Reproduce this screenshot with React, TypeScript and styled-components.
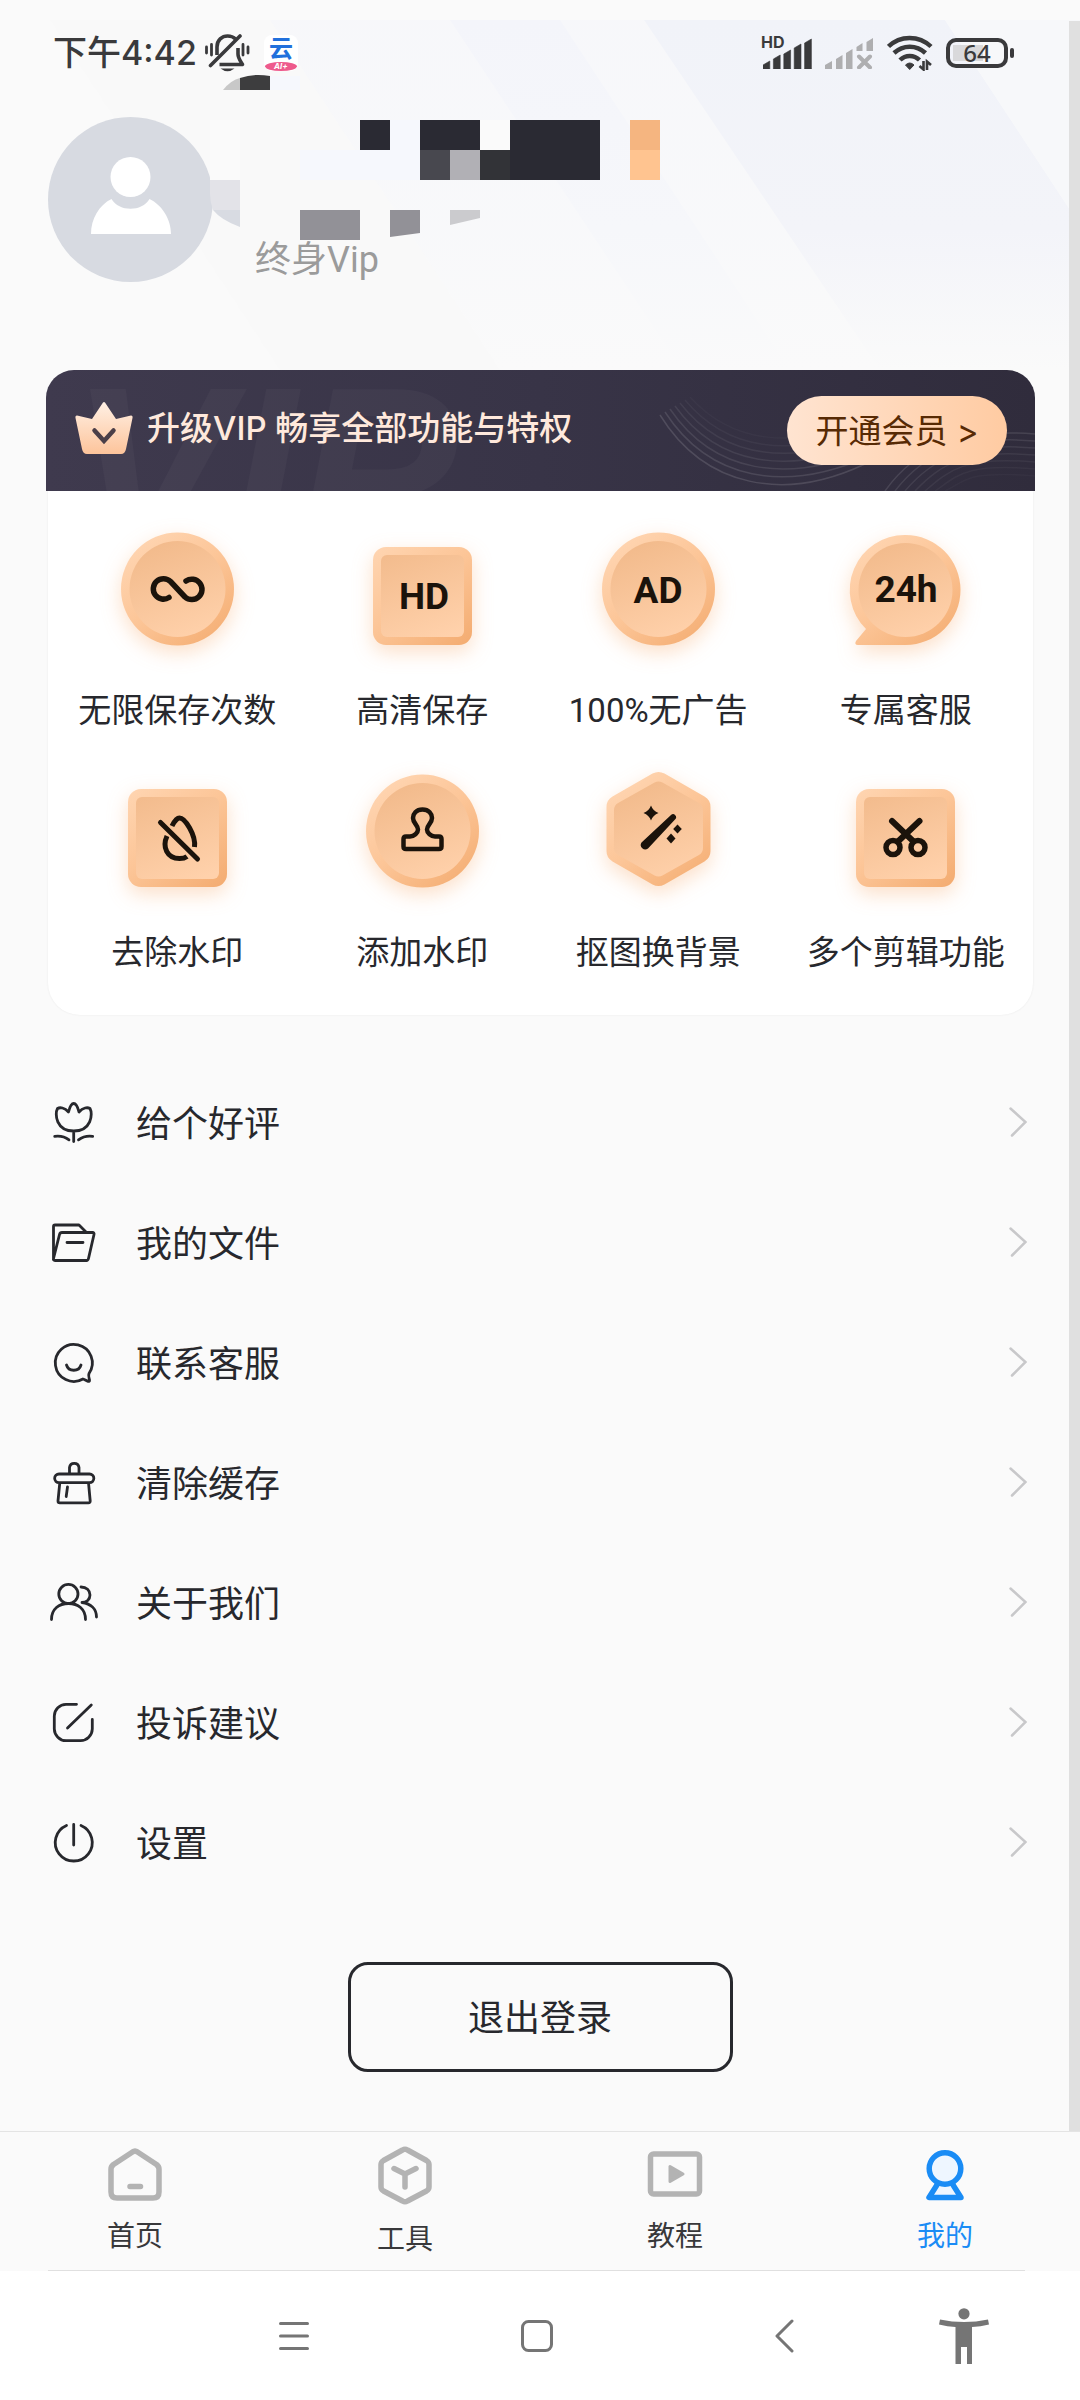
import React from "react";
import styled, { createGlobalStyle } from "styled-components";

const ink = "#27282d";
const grey = "#757575";
const muted = "#b3b3b3";
const blue = "#1a8cf5";

const GlobalStyle = createGlobalStyle`
  *, *::before, *::after { box-sizing: border-box; }
  body {
    margin: 0;
    background: #fafafa;
    color: ${ink};
    font-family: Inter, "Noto Sans CJK SC", sans-serif;
  }
  button { font: inherit; color: inherit; background: none; border: 0; padding: 0; cursor: pointer; }
  a { color: inherit; text-decoration: none; }
  ul { list-style: none; margin: 0; padding: 0; }
  svg { display: block; flex: none; }
`;

const Page = styled.div`
  min-height: 100vh;
  display: flex;
  flex-direction: column;
`;

const Content = styled.main`
  position: relative;
  flex: 1;
  padding-bottom: 59px;
`;

const ScrollTrack = styled.div`
  position: absolute;
  top: 21px;
  right: 0;
  bottom: 0;
  width: 11px;
  background: #e0e0e0;
`;

/* ---------- header ---------- */

const Header = styled.header`
  position: relative;
  padding: 20px 48px 88px;
`;

const HeaderArt = styled.svg`
  position: absolute;
  top: 20px;
  left: 0;
  width: 100%;
  height: 350px;
`;

const StatusBar = styled.div`
  position: relative;
  display: flex;
  align-items: center;
  justify-content: space-between;
  height: 66px;
  padding: 0 17px 0 5px;
  color: #3a3a3c;
`;

const StatusGroup = styled.div<{ $gap: number }>`
  display: flex;
  align-items: center;
  gap: ${(p) => p.$gap}px;
`;

const Clock = styled.time`
  font-size: 34px;
  line-height: 40px;
  font-weight: 500;
`;

const CloudApp = styled.span`
  position: relative;
  display: block;
  width: 34px;
  height: 36px;
  margin-left: 6px;
  overflow: hidden;
  border-radius: 8px;
  background: #fff;
  color: #2170dc;
  font-size: 24px;
  line-height: 28px;
  font-weight: 700;
  text-align: center;
`;

const CloudTag = styled.span`
  position: absolute;
  left: 1px;
  right: 1px;
  bottom: 0;
  height: 9px;
  border-radius: 50%;
  background: #ee5a8c;
  color: #fff;
  font-size: 8px;
  line-height: 9px;
  font-style: italic;
`;

const Signal = styled.span`
  position: relative;
  display: block;
`;

const SignalTag = styled.span`
  position: absolute;
  top: -4px;
  left: -2px;
  font-size: 16px;
  line-height: 16px;
  font-weight: 700;
`;

const Battery = styled.span`
  position: relative;
  display: flex;
  align-items: center;
  justify-content: center;
  width: 62px;
  height: 30px;
  margin-right: 7px;
  border: 4px solid #3a3a3c;
  border-radius: 10px;
  background: linear-gradient(#d9d9db, #d9d9db) 3px 3px / 30px 16px no-repeat;
  font-family: "Noto Sans", sans-serif;
  font-size: 24px;
  line-height: 24px;
  font-weight: 500;

  &::after {
    content: "";
    position: absolute;
    right: -10px;
    top: 6px;
    width: 4px;
    height: 10px;
    border-radius: 2px;
    background: #3a3a3c;
  }
`;

const Profile = styled.div`
  position: relative;
  display: flex;
  align-items: flex-end;
  gap: 42px;
  margin-top: 31px;
`;

const Level = styled.p`
  margin: 0;
  color: #9b9b9b;
  font-family: Roboto, "Noto Sans CJK SC", sans-serif;
  font-size: 36px;
  line-height: 44px;
`;

const MaskedName = styled.svg`
  position: absolute;
  left: 162px;
  top: -43px;
`;

/* ---------- membership card ---------- */

const Membership = styled.section`
  margin: 0 45px 0 46px;
`;

const Banner = styled.div`
  position: relative;
  display: flex;
  align-items: center;
  justify-content: space-between;
  height: 121px;
  padding: 0 28px 0 29px;
  overflow: hidden;
  border-radius: 28px 28px 0 0;
  background: linear-gradient(90deg, #3f3a4e, #383447 50%, #302c3c);
`;

const Watermark = styled.span`
  position: absolute;
  left: 24px;
  top: -14px;
  color: rgba(255, 255, 255, 0.03);
  font-family: "Liberation Sans", sans-serif;
  font-size: 240px;
  line-height: 230px;
  font-weight: 700;
  font-style: italic;
`;

const Ripples = styled.svg`
  position: absolute;
  right: 0;
  top: 0;
`;

const BannerLead = styled.div`
  position: relative;
  display: flex;
  align-items: center;
  gap: 14px;
  padding-bottom: 6px;
`;

const BannerTitle = styled.h2`
  margin: 0;
  color: #ffe9dc;
  font-size: 33px;
  line-height: 44px;
  font-weight: 500;
`;

const UpgradeButton = styled.button`
  position: relative;
  width: 220px;
  height: 69px;
  border-radius: 35px;
  background: linear-gradient(90deg, #ffe4d1, #ffcba2);
  color: #572a04;
  font-size: 33px;
  line-height: 44px;
`;

const Features = styled.ul`
  display: grid;
  grid-template-columns: 258fr 231fr 240fr 254fr;
  row-gap: 16px;
  margin: 0 2px;
  padding: 16px 0 40px;
  border-radius: 0 0 32px 32px;
  background: #fff;
  box-shadow: 0 0 2px #e8e8e8;
`;

const Feature = styled.li`
  display: flex;
  flex-direction: column;
  align-items: center;
  gap: 17px;
  font-family: Roboto, "Noto Sans CJK SC", sans-serif;
  font-size: 33px;
  line-height: 44px;
`;

const BadgeText = styled.text`
  font-family: Roboto, sans-serif;
  font-size: 37px;
  font-weight: 700;
  text-anchor: middle;
  fill: #1b130b;
`;

/* ---------- menu ---------- */

const Menu = styled.ul`
  margin: 47px 53px 60px 50px;
`;

const MenuLink = styled.a`
  display: flex;
  align-items: center;
  gap: 38px;
  height: 120px;
  font-size: 36px;
  line-height: 48px;
`;

const MenuLabel = styled.span`
  flex: 1;
  padding-top: 3px;
`;

const LogoutButton = styled.button`
  display: block;
  width: 385px;
  height: 110px;
  margin: 0 auto;
  padding-top: 2px;
  border: 3px solid ${ink};
  border-radius: 20px;
  font-size: 36px;
  line-height: 48px;
`;

/* ---------- bottom bars ---------- */

const TabBar = styled.nav`
  position: relative;
  display: grid;
  grid-template-columns: repeat(4, 1fr);
  height: 140px;
  padding-top: 14px;
  border-top: 1px solid #e4e4e4;

  &::after {
    content: "";
    position: absolute;
    left: 48px;
    right: 55px;
    bottom: 0;
    height: 1px;
    background: #e0e0e0;
  }
`;

const Tab = styled.a<{ $active?: boolean }>`
  display: flex;
  flex-direction: column;
  align-items: center;
  gap: 14px;
  color: ${(p) => (p.$active ? blue : "#38383a")};
  font-size: 28px;
  line-height: 40px;
`;

const SystemNav = styled.div`
  display: grid;
  grid-template-columns: 244fr 242fr 252fr 108fr;
  height: 129px;
  padding: 0 62px 0 172px;
  background: #fff;
`;

const SystemButton = styled.button`
  display: flex;
  align-items: center;
  justify-content: center;
`;

/* ---------- drawings ---------- */

function Gradients() {
  return (
    <svg width="0" height="0" style={{ position: "absolute" }} aria-hidden="true">
      <defs>
        <linearGradient id="rim" gradientUnits="userSpaceOnUse" x1="40" y1="30" x2="126" y2="136">
          <stop offset="0" stopColor="#ffd6b3" />
          <stop offset="0.5" stopColor="#fcc597" />
          <stop offset="1" stopColor="#f4ad72" />
        </linearGradient>
        <linearGradient id="face" gradientUnits="userSpaceOnUse" x1="62" y1="34" x2="100" y2="132">
          <stop offset="0" stopColor="#f2ba8b" />
          <stop offset="1" stopColor="#ffd1ab" />
        </linearGradient>
        <linearGradient id="crown" x1="0" y1="0" x2="0" y2="1">
          <stop offset="0" stopColor="#fff0e4" />
          <stop offset="1" stopColor="#fdc49b" />
        </linearGradient>
        <linearGradient id="bandStrong" x1="0" y1="0" x2="0" y2="1">
          <stop offset="0" stopColor="#f1f3f9" />
          <stop offset="0.6" stopColor="#f3f4f9" />
          <stop offset="1" stopColor="#fafafa" />
        </linearGradient>
        <linearGradient id="bandSoft" x1="0" y1="0" x2="0" y2="1">
          <stop offset="0" stopColor="#f4f5fa" />
          <stop offset="0.6" stopColor="#f6f7fa" />
          <stop offset="1" stopColor="#fafafa" />
        </linearGradient>
        <filter id="glow" x="-40%" y="-40%" width="180%" height="180%">
          <feDropShadow dx="0" dy="7" stdDeviation="10" floodColor="#f8b988" floodOpacity="0.45" />
        </filter>
      </defs>
    </svg>
  );
}

type Shape = "round" | "square" | "hex" | "bubble";

function Badge({ shape, children }: { shape: Shape; children: React.ReactNode }) {
  return (
    <svg width="165" height="165" viewBox="0 0 165 165" overflow="visible" aria-hidden="true">
      {shape === "round" && (
        <>
          <circle cx="82.5" cy="82" r="56.5" fill="url(#rim)" filter="url(#glow)" />
          <circle cx="82.5" cy="82" r="48" fill="url(#face)" />
        </>
      )}
      {shape === "square" && (
        <>
          <rect x="33" y="40" width="99" height="98" rx="13" fill="url(#rim)" filter="url(#glow)" />
          <rect x="41" y="48" width="83" height="82" rx="6" fill="url(#face)" />
        </>
      )}
      {shape === "hex" && (
        <>
          <path d="M82.5 35 122.500 58V102L82.5 125 42.500 102V58Z" fill="url(#rim)" stroke="url(#rim)" strokeWidth="24" strokeLinejoin="round" filter="url(#glow)" />
          <path d="M82.5 40.500 119 61V99L82.500 119.500 46 99V61Z" fill="url(#face)" stroke="url(#face)" strokeWidth="16" strokeLinejoin="round" />
        </>
      )}
      {shape === "bubble" && (
        <>
          <path d="M82.500 28A55 55 0 0 1 82.500 138H35Q31 138 33 134L43 122A55 55 0 0 1 82.500 28Z" fill="url(#rim)" filter="url(#glow)" />
          <circle cx="82.5" cy="83" r="47" fill="url(#face)" />
        </>
      )}
      <g fill="none" stroke="#1b130b" strokeLinecap="round" strokeLinejoin="round">
        {children}
      </g>
    </svg>
  );
}

const features: { label: string; shape: Shape; glyph: React.ReactNode }[] = [
  {
    label: "无限保存次数",
    shape: "round",
    glyph: <path strokeWidth="5.500" d="M74 90.500A10.200 10.200 0 1 1 75.500 74.500L90 90A10.200 10.200 0 1 0 91 74" />,
  },
  { label: "高清保存", shape: "square", glyph: <BadgeText stroke="none" x="84" y="102">HD</BadgeText> },
  { label: "100%无广告", shape: "round", glyph: <BadgeText stroke="none" x="82" y="96">AD</BadgeText> },
  { label: "专属客服", shape: "bubble", glyph: <BadgeText stroke="none" x="83" y="95">24h</BadgeText> },
  {
    label: "去除水印",
    shape: "square",
    glyph: (
      <>
        <path strokeWidth="5" strokeLinecap="butt" d="M77 77C80 71 83 69 84.500 69C90 69 101 86 99.500 98M72 87C67 98 72 109.500 84.500 109.500C88 109.500 90 109 92 107.500" />
        <path strokeWidth="5" d="M65.500 73.500 102.500 110" />
      </>
    ),
  },
  {
    label: "添加水印",
    shape: "round",
    glyph: (
      <path strokeWidth="4.5" d="M82.500 60.500C76 60.500 73 65 73 69C73 74 78 76 78 80.500C78 84 74 87.500 70 87.500H66Q63.500 87.500 63.500 90V97.500Q63.500 100 66 100H99Q101.500 100 101.500 97.500V90Q101.500 87.500 99 87.500H95C91 87.500 87 84 87 80.500C87 76 92 74 92 69C92 65 89 60.500 82.500 60.500Z" />
    ),
  },
  {
    label: "抠图换背景",
    shape: "hex",
    glyph: (
      <g fill="#1b130b" stroke="none">
        <path d="M65.500 93.500 95 66A3 3 0 0 1 99 70.500L72 99.500A4.500 4.500 0 0 1 65.500 93.500Z" />
        <path d="M75 56.500Q77 62 82.500 64 77 66 75 71.500 73 66 67.500 64 73 62 75 56.500Z" />
        <path d="M101.500 75.500 105.800 80 101.500 84.500 97.200 80Z" />
        <path d="M95 84.500 99.500 89.500 95 94.500 90.500 89.500Z" />
      </g>
    ),
  },
  {
    label: "多个剪辑功能",
    shape: "square",
    glyph: (
      <>
        <path strokeWidth="6" d="M69 72 90 92M96.500 72 75.500 92" />
        <g strokeWidth="5.5">
          <circle cx="70" cy="98.5" r="7" />
          <circle cx="95" cy="98.5" r="7" />
        </g>
      </>
    ),
  },
];

const menu: { label: string; icon: React.ReactNode }[] = [
  {
    label: "给个好评",
    icon: (
      <path d="M18.500 14C14.500 9.500 10 9 7.500 10.500C4.500 16 6 33 23.700 33C41.500 33 43 16 40 10.500C37.500 9 33 9.500 29 14C27.500 8 25.500 5.500 23.700 5.500C22 5.500 20 8 18.500 14ZM23.700 33V43.500M4.700 38.300C10.500 37.500 15 38.800 19 41.800M42.700 38.300C37 37.500 32.500 38.800 28.500 41.800" />
    ),
  },
  {
    label: "我的文件",
    icon: (
      <path d="M3.500 41.500V8.500Q3.500 7 5 7H29L36 14M12 14.500H42.500Q44.500 14.500 44 16.500L38.500 40.500Q38 42.500 36.500 42.500H5Q3 42.500 3.500 40.500L9.500 16.500Q10 14.500 12 14.500ZM17 24.500H33" />
    ),
  },
  {
    label: "联系客服",
    icon: (
      <path d="M33 41A18.500 18.500 0 1 1 39 35.500C38 37.500 39 40 39.500 42Q39.800 43.500 38 43.300C36.500 43 35 41.500 33 41ZM16.500 27C18.500 34 29 34 31 27" />
    ),
  },
  {
    label: "清除缓存",
    icon: (
      <path d="M19.500 16V9.500A4.800 4.800 0 0 1 29 9.500V16M9 16H39.500A4.300 4.300 0 0 1 39.500 24.700H9A4.300 4.300 0 0 1 9 16ZM9.800 24.700 8 43Q8 44.800 9.800 44.800H38.500Q40.300 44.800 40.200 43L38.500 24.700M17.500 29 16.200 38.500" />
    ),
  },
  {
    label: "关于我们",
    icon: (
      <path d="M28 16A9.600 9.600 0 1 1 8.800 16A9.600 9.600 0 0 1 28 16ZM1.500 41.500C1.500 31 9 25.500 18.500 25.500C28 25.500 35.500 31 35.500 41.500M31 9C36.500 9 40 12.500 40 17C40 21.500 36.500 24.500 32 24.500C41 25.500 46.500 31 46.500 39" />
    ),
  },
  {
    label: "投诉建议",
    icon: (
      <path d="M26.500 6.300H16A12 12 0 0 0 4.300 18V31A12 12 0 0 0 16 42.700H30.500A12 12 0 0 0 42.300 31V21.500M17.500 30 41.300 7" />
    ),
  },
  {
    label: "设置",
    icon: <path d="M16.500 7.500A18.500 18.500 0 1 0 31 7.500M23.700 6.500V27" />,
  },
];

const rise = [8, 14, 19, 25, 30];

function SignalBars() {
  return (
    <svg width="49" height="31" viewBox="0 0 49 31" fill="#3a3a3c" aria-hidden="true">
      {rise.map((h, i) => (
        <path key={h} d={`M${i * 10.400} ${31 - h + 4}L${i * 10.400 + 6.800} ${31 - h}V31H${i * 10.400}Z`} stroke="#3a3a3c" strokeWidth="0.6" />
      ))}
    </svg>
  );
}

function SignalBarsOff() {
  return (
    <svg width="49" height="31" viewBox="0 0 49 31" fill="#aeaeb0" aria-hidden="true">
      <path d="M0 27 7 23V31H0ZM11 21 17.500 17V31H11ZM21 15 27.500 11V31H21ZM31.500 9 37.500 5V13H31.500ZM41.500 4 48 0V13H41.500Z" />
      <path d="M34 18.500 45 29.500M45 18.500 34 29.500" stroke="#aeaeb0" strokeWidth="4" strokeLinecap="round" />
    </svg>
  );
}

function Wifi() {
  return (
    <svg width="46" height="36" viewBox="0 0 46 36" aria-hidden="true">
      <g fill="none" stroke="#3a3a3c" strokeWidth="4.5">
        <path d="M1.500 11.500C13 0 32 0 44 11.500" />
        <path d="M7 18C16 9.500 29.500 9.500 38.500 18" />
        <path d="M13 25C18.500 19.500 27 19.500 32.500 25" />
      </g>
      <path d="M18.500 30Q22.700 26 27 30L22.700 34.500Z" fill="#3a3a3c" stroke="#3a3a3c" strokeLinejoin="round" />
      <path d="M36.500 26V34.500L32.500 31M40 35V26.500L44 30" fill="none" stroke="#3a3a3c" strokeWidth="2.6" />
    </svg>
  );
}

function MutedBell() {
  return (
    <svg width="45" height="38" viewBox="0 0 45 38" fill="none" stroke="#3a3a3c" strokeWidth="3.6" aria-hidden="true">
      <path d="M12 21V13C12 6 17 2 22.600 2C26 2 28.500 3 30.500 5M33 14V20C33 24 35.500 27 37.500 30.500H14.500" strokeLinejoin="round" />
      <path d="M5.500 31.500 35 2" strokeLinecap="round" />
      <path d="M1.500 13V19M6.500 10.500V21M38 10.500V21M43 13V19" strokeWidth="2.8" strokeLinecap="round" />
      <path d="M15.500 34.500H29.500Q22.500 40 15.500 34.500Z" fill="#3a3a3c" stroke="none" />
    </svg>
  );
}

export default function App() {
  return (
    <>
      <GlobalStyle />
      <Gradients />
      <Page lang="zh-CN">
        <Content>
          <Header>
            <HeaderArt viewBox="0 0 1080 350" preserveAspectRatio="none" aria-hidden="true">
              <path d="M50 0H270L500 350H280Z" fill="#f9f9f9" />
              <path d="M270 0H644L880 350H680L574 180 450 0L690 350H500Z" fill="url(#bandSoft)" opacity="0.5" />
              <path d="M450 0H560L790 350H682Z" fill="url(#bandSoft)" />
              <path d="M644 0H945L1080 205V350H880Z" fill="url(#bandStrong)" />
              <path d="M945 0H1080V205Z" fill="#f7f8fa" />
            </HeaderArt>

            <StatusBar>
              <StatusGroup $gap={8}>
                <Clock>下午4:42</Clock>
                <MutedBell />
                <CloudApp>
                  云<CloudTag>AI+</CloudTag>
                </CloudApp>
              </StatusGroup>
              <StatusGroup $gap={13}>
                <Signal>
                  <SignalTag>HD</SignalTag>
                  <SignalBars />
                </Signal>
                <SignalBarsOff />
                <Wifi />
                <Battery>64</Battery>
              </StatusGroup>
            </StatusBar>

            <Profile>
              <svg width="165" height="165" viewBox="0 0 165 165" role="img" aria-label="头像">
                <circle cx="82.5" cy="82.5" r="82.500" fill="#d7dae1" />
                <circle cx="82.5" cy="60" r="20" fill="#fff" />
                <path d="M43 117C43 102 51 88 63.500 82C71 95 94 95 101.500 82C114 88 123 102 123 117Z" fill="#fff" />
              </svg>
              <Level>终身Vip</Level>
              <MaskedName width="450" height="168" viewBox="0 0 450 168" aria-hidden="true">
                <path d="M13 16Q21 6 30 4V16Z" fill="#c8c8c8" />
                <path d="M30 4Q44 -1 60 2V16H30Z" fill="#3d3d3e" />
                <path d="M60 2H90V16H60ZM150 46H210V106H150ZM180 46H300V106H180ZM90 76H150V106H90Z" fill="#f6f8fd" />
                <path d="M0 46H30V106H0Z" fill="#fafafa" />
                <path d="M0 106H30V136H3Q0 128 0 120Z" fill="#e3e3e8" />
                <path d="M3 136H30V153Q11 146 3 136Z" fill="#d8dbe2" />
                <path d="M150 46H180V76H150ZM210 46H270V76H210ZM300 46H390V106H300Z" fill="#2a2a33" />
                <path d="M210 76H240V106H210Z" fill="#48484f" />
                <path d="M240 76H270V106H240Z" fill="#b1b0b5" />
                <path d="M270 76H300V106H270Z" fill="#323337" />
                <path d="M270 46H300V76H270Z" fill="#fafafa" />
                <path d="M420 46H450V76H420Z" fill="#f5b580" />
                <path d="M420 76H450V106H420Z" fill="#ffc490" />
                <path d="M90 136H150V166H90ZM180 136H210V159L180 163Z" fill="#929197" />
                <path d="M240 136H270V144L240 151Z" fill="#cbcbce" />
              </MaskedName>
            </Profile>
          </Header>

          <Membership>
            <Banner>
              <Watermark aria-hidden="true">VIP</Watermark>
              <Ripples width="400" height="121" viewBox="0 0 400 121" fill="none" stroke="#fff" strokeWidth="1.5" aria-hidden="true">
                {[0, 1, 2, 3, 4, 5, 6].map((i) => (
                  <path
                    key={i}
                    opacity={0.13 - i * 0.017}
                    d={`M${25 + i * 5} ${45 - i * 3}C${70 + i * 4} ${118 - i * 8} ${150} ${132 - i * 8} ${230 + i * 4} ${94 - i * 8}`}
                  />
                ))}
                {[0, 1, 2, 3, 4, 5, 6].map((i) => (
                  <path
                    key={i}
                    opacity={0.11 - i * 0.014}
                    d={`M${250 + i * 10} 121C${282 + i * 8} ${76 + i * 6} ${330} ${58 + i * 7} 400 ${64 + i * 7}`}
                  />
                ))}
              </Ripples>
              <BannerLead>
                <svg width="58" height="52" viewBox="0 0 58 52" aria-hidden="true">
                  <path d="M29 0Q30 0 31 2L41 17 56 13.500Q58 13.500 57.500 16L51 47Q50 52 46 52H12Q8 52 7 47L.5 16Q0 13.500 2 13.500L17 17 27 2Q28 0 29 0Z" fill="url(#crown)" />
                  <path d="M19.500 28.500 29 39 38.500 28.500" fill="none" stroke="#4b3f48" strokeWidth="4.5" strokeLinecap="round" />
                </svg>
                <BannerTitle>升级VIP 畅享全部功能与特权</BannerTitle>
              </BannerLead>
              <UpgradeButton>开通会员 &gt;</UpgradeButton>
            </Banner>
            <Features>
              {features.map((f) => (
                <Feature key={f.label}>
                  <Badge shape={f.shape}>{f.glyph}</Badge>
                  {f.label}
                </Feature>
              ))}
            </Features>
          </Membership>

          <Menu>
            {menu.map((m) => (
              <li key={m.label}>
                <MenuLink href="#">
                  <svg width="48" height="48" viewBox="0 0 48 48" fill="none" stroke={ink} strokeWidth="2.8" strokeLinecap="round" strokeLinejoin="round" aria-hidden="true">
                    {m.icon}
                  </svg>
                  <MenuLabel>{m.label}</MenuLabel>
                  <svg width="18" height="30" viewBox="0 0 18 30" fill="none" stroke="#c8c8ca" strokeWidth="2.5" strokeLinecap="round" aria-hidden="true">
                    <path d="M1.500 1.500 16.500 15 3 28.500" />
                  </svg>
                </MenuLink>
              </li>
            ))}
          </Menu>

          <LogoutButton>退出登录</LogoutButton>
          <ScrollTrack />
        </Content>

        <TabBar>
          <Tab href="#">
            <svg width="56" height="56" viewBox="0 0 56 56" fill="none" stroke={muted} strokeWidth="5.5" strokeLinecap="round" strokeLinejoin="round" aria-hidden="true">
              <path d="M25.500 6Q28 4 30.500 6L49.500 18.500Q52 20.500 52 23V46Q52 52 46 52H10Q4 52 4 46V23Q4 20.500 6.500 18.500ZM23 40.500H33.500" />
            </svg>
            首页
          </Tab>
          <Tab href="#">
            <svg width="56" height="59" viewBox="0 0 56 59" fill="none" stroke={muted} strokeWidth="5.500" strokeLinecap="round" strokeLinejoin="round" aria-hidden="true">
              <path d="M25.500 4Q28 2.500 30.500 4L49.500 14.500Q52 16 52 18.500V41Q52 43.500 49.500 45L30.500 55Q28 56.500 25.500 55L6.500 45Q4 43.500 4 41V18.500Q4 16 6.500 14.500ZM17 22.500 28 28 39 22.500M28 28V41" />
            </svg>
            工具
          </Tab>
          <Tab href="#">
            <svg width="56" height="56" viewBox="0 0 56 56" fill="none" stroke={muted} strokeWidth="5.500" strokeLinejoin="round" aria-hidden="true">
              <rect x="3.500" y="8" width="49" height="40" rx="3" />
              <path d="M23 20.500V35.500L36 28Z" fill={muted} stroke={muted} strokeWidth="3" />
            </svg>
            教程
          </Tab>
          <Tab href="#" $active aria-current="page">
            <svg width="56" height="56" viewBox="0 0 56 56" fill="#eef6ff" stroke={blue} strokeWidth="5.500" strokeLinejoin="round" aria-hidden="true">
              <path d="M21.500 36.500 12 51.500H44L34.500 36.500Z" />
              <circle cx="28" cy="22.500" r="15.800" />
            </svg>
            我的
          </Tab>
        </TabBar>

        <SystemNav>
          <SystemButton aria-label="最近任务">
            <svg width="30" height="30" viewBox="0 0 30 30" stroke={grey} strokeWidth="3" strokeLinecap="round" aria-hidden="true">
              <path d="M1.500 2.500H28.500M1.500 15H28.500M1.500 27.500H28.500" />
            </svg>
          </SystemButton>
          <SystemButton aria-label="主屏幕">
            <svg width="32" height="32" viewBox="0 0 32 32" fill="none" stroke={grey} strokeWidth="3" aria-hidden="true">
              <rect x="1.500" y="1.500" width="29" height="29" rx="6" />
            </svg>
          </SystemButton>
          <SystemButton aria-label="返回">
            <svg width="20" height="34" viewBox="0 0 20 34" fill="none" stroke={grey} strokeWidth="3" strokeLinecap="round" strokeLinejoin="round" aria-hidden="true">
              <path d="M18 2 3 17 18 32" />
            </svg>
          </SystemButton>
          <SystemButton aria-label="无障碍">
            <svg width="50" height="56" viewBox="0 0 50 56" fill={grey} aria-hidden="true">
              <circle cx="25" cy="5.800" r="5.600" />
              <path d="M1 11.500Q25 16.500 49 11.500L50 16.500Q41.500 18.500 33 19V56H28V39H22V56H16.500V19Q8.500 18.500 0 16.500Z" />
            </svg>
          </SystemButton>
        </SystemNav>
      </Page>
    </>
  );
}
